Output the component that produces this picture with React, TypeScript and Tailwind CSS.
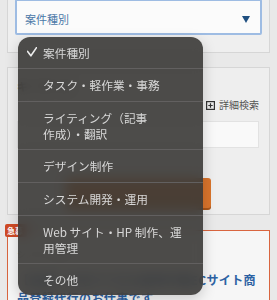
import React from "react";

const items: { label: React.ReactNode; two?: boolean; checked?: boolean }[] = [
  { label: "案件種別", checked: true },
  { label: "タスク・軽作業・事務" },
  { label: <>ライティング（記事<br />作成）・翻訳</>, two: true },
  { label: "デザイン制作" },
  { label: "システム開発・運用" },
  { label: <>Web サイト・HP 制作、運<br />用管理</>, two: true },
  { label: "その他" },
];

export default function App() {
  return (
    <div className="relative w-[277px] h-[300px] overflow-hidden bg-[#e9e9e9] font-['Noto_Sans_CJK_JP','Noto_Sans',sans-serif]">
      {/* Panel 1 */}
      <div className="mx-[7px] -mt-[10px] border border-[#d6d6d6] bg-[#efefef] px-[7px] pt-[8px] pb-[17px]">
        <div className="h-[36px] rounded-[2px] border-2 border-[#9ebce3] bg-[#fbfbfb] flex items-center justify-between pl-[8px] pr-[10px] pt-[4px]">
          <span className="text-[11px] leading-[14px] text-[#4b78a8]">案件種別</span>
          <svg width="8" height="7" viewBox="0 0 8 7">
            <polygon points="0,0 8,0 4,7" fill="#1f4f80" />
          </svg>
        </div>
      </div>

      {/* Panel 2 */}
      <div className="mx-[7px] mt-[14px] h-[148px] border border-[#d6d6d6] bg-[#eeeeee] pl-[9px] pr-[10px] pt-[12px]">
        <div className="text-[11px] leading-[12px] text-[#444] font-bold">キーワード</div>
        <div className="mt-[7px] flex items-center justify-end gap-[4px]">
          <svg width="9" height="9" viewBox="0 0 9 9">
            <rect x="0.6" y="0.6" width="7.8" height="7.8" fill="none" stroke="#333" strokeWidth="1.2" />
            <path d="M2.3 4.5h4.4M4.5 2.3v4.4" stroke="#333" strokeWidth="1.2" />
          </svg>
          <span className="text-[10px] leading-[12px] text-[#555]">詳細検索</span>
        </div>
        <div className="mt-[10px] h-[27px] border border-[#e2e2e2] bg-[#f9f9f9]" />
        <div className="mt-[30px] ml-[49px] w-[145px] h-[30px] rounded-[3px] bg-[#d9742c] shadow-[0_2px_0_#a9561b]" />
      </div>

      {/* Red card */}
      <div className="relative mx-[7px] mt-[15px] h-[90px] border-[1.5px] border-[#d9653f] bg-[#f6f6f6] pl-[9px] pt-[18px]">
        <div className="absolute -left-[3px] -top-[7px] h-[13px] w-[22px] rounded-[2px] bg-[#cf4a26] pl-[2px] text-[8px] leading-[13px] font-bold text-white">
          急募
        </div>
        <div className="text-[9px] leading-[12px] text-[#999]">システム開発</div>
        <div className="mt-[10px] whitespace-nowrap text-[12px] tracking-[0.4px] leading-[18px] font-bold text-[#2d62a3]">
          【急募】在宅でできる簡単作業ECサイト商
          <br />
          品登録代行のお仕事です
        </div>
      </div>

      {/* iOS select dropdown */}
      <div className="absolute left-[18px] top-[37px] w-[185px] overflow-hidden rounded-[12px] bg-[rgba(58,56,54,0.9)] backdrop-blur-[6px] shadow-[0_4px_14px_rgba(0,0,0,0.18)]">
        {items.map((it, i) => (
          <div
            key={i}
            className={`relative pl-[25px] pr-[8px] text-[11.7px] leading-[16px] text-[#d8d8d8] ${
              i === 0 ? "" : "border-t border-[#626060]"
            } ${it.two ? "py-[7.5px]" : i === 0 || i === items.length - 1 ? "py-[7.5px]" : "py-[8px]"}`}
          >
            {it.checked && (
              <svg className="absolute left-[9px] top-[10px]" width="10" height="10" viewBox="0 0 10 10">
                <path d="M0.6 4.4 L3.9 8.8 L9.5 0.6" fill="none" stroke="#ececec" strokeWidth="1.6" strokeLinecap="round" strokeLinejoin="round" />
              </svg>
            )}
            {it.label}
          </div>
        ))}
      </div>
    </div>
  );
}
